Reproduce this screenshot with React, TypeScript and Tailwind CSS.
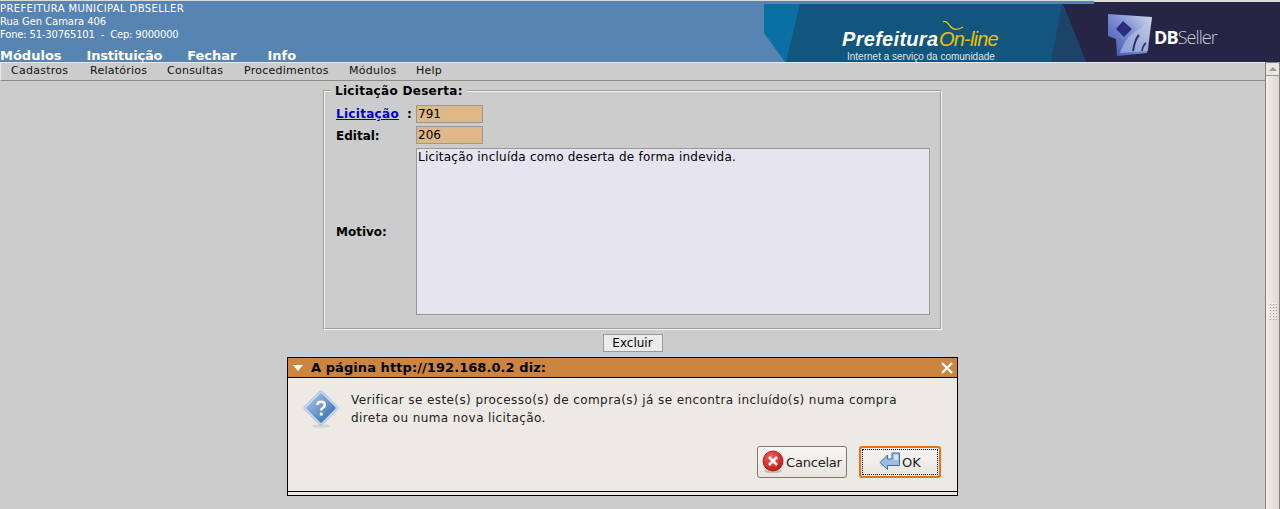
import { Fragment } from 'react';

const TOP_MENU = [
  { label: 'Módulos', cls: 'ml-0' },
  { label: 'Instituição', cls: 'ml-[25px] tracking-[-0.2px]' },
  { label: 'Fechar', cls: 'ml-[25px]' },
  { label: 'Info', cls: 'ml-[31px]' },
];
const SUB_MENU = [
  { label: 'Cadastros', cls: 'w-[59px]' },
  { label: 'Relatórios', cls: 'w-[57px]' },
  { label: 'Consultas', cls: 'w-[57px]' },
  { label: 'Procedimentos', cls: 'w-[85px]' },
  { label: 'Módulos', cls: 'w-[47px]' },
  { label: 'Help', cls: 'w-[25px]' },
];

function BannerArt() {
  return (
    <svg width="516" height="61" viewBox="0 0 516 61" className="block">
      <defs>
        <linearGradient id="cube" x1="0" y1="1" x2="1" y2="0">
          <stop offset="0" stopColor="#3a4fb4" />
          <stop offset="0.55" stopColor="#7f92d2" />
          <stop offset="1" stopColor="#d5dbee" />
        </linearGradient>
        <filter id="soft">
          <feGaussianBlur stdDeviation="0.6" />
        </filter>
      </defs>
      <rect width="516" height="61" fill="#125680" />
      <polygon points="0,3 36,3 22,61 20,61 0,32" fill="#0a6fa2" />
      <polygon points="0,32 21,61 0,61" fill="#5884b2" />
      <polygon points="298,1 516,1 516,61 322,61" fill="#272546" />
      <polygon points="287,61 298,3 322,61" fill="#1d4468" />
      <rect x="0" y="0" width="330" height="3" fill="#5884b2" />
      <rect x="330" y="0" width="186" height="1" fill="#dcdad5" />
      <g filter="url(#soft)">
        <path d="M344 13 L388 16 L383 52 L353 55 L352 38 L344 35 Z" fill="url(#cube)" />
        <path d="M359 20 L368 28 L360 36 L352 28 Z" fill="#2c2f7e" />
        <path d="M356 52 Q362 34 376 28 L386 17 L388 16 L384 50 Z" fill="#c3cbe6" opacity="0.55" />
        <path d="M369 50 Q371 38 375 34" fill="none" stroke="#2a3070" strokeWidth="2" />
        <path d="M378 50 Q379 44 382 42" fill="none" stroke="#2a3070" strokeWidth="1.6" />
      </g>
      <path d="M179 21 C181 19 184 22 186 25 C189 29 194 29 199 26" fill="none" stroke="#e8c400" strokeWidth="1.3" />
    </svg>
  );
}

function QuestionIcon() {
  return (
    <svg width="38" height="40" viewBox="0 0 38 40" className="block">
      <defs>
        <linearGradient id="q" x1="0" y1="0" x2="1" y2="0">
          <stop offset="0" stopColor="#8fb2da" />
          <stop offset="1" stopColor="#4a7db8" />
        </linearGradient>
      </defs>
      <ellipse cx="19" cy="36" rx="9" ry="1.6" fill="#000" opacity="0.1" />
      <rect x="6.2" y="5.2" width="25.6" height="25.6" rx="2.5" transform="rotate(45 19 18)" fill="#c7d7ea" stroke="#a8bfd9" strokeWidth="0.8" />
      <rect x="8.2" y="7.2" width="21.6" height="21.6" rx="1.5" transform="rotate(45 19 18)" fill="url(#q)" />
      <path d="M15.2 15 q0.4 -3.3 3.8 -3.3 q3.9 0 3.9 3 q0 2 -2.1 3.1 q-1.6 0.9 -1.6 2.6" fill="none" stroke="#fff" strokeWidth="2.5" />
      <rect x="17.8" y="22.6" width="2.9" height="2.9" fill="#fff" />
    </svg>
  );
}

function CancelIcon() {
  return (
    <svg width="22" height="24" viewBox="0 0 22 24" className="block">
      <defs>
        <radialGradient id="r" cx="0.4" cy="0.3" r="0.8">
          <stop offset="0" stopColor="#f2615a" />
          <stop offset="1" stopColor="#bf0e0c" />
        </radialGradient>
      </defs>
      <ellipse cx="11" cy="21" rx="9" ry="2" fill="#000" opacity="0.18" />
      <circle cx="11" cy="11" r="10" fill="url(#r)" stroke="#a80f0c" strokeWidth="0.8" />
      <path d="M7 7 L15 15 M15 7 L7 15" stroke="#fff" strokeWidth="2.6" />
    </svg>
  );
}

function OkIcon() {
  return (
    <svg width="22" height="20" viewBox="0 0 22 20" className="block">
      <path d="M20.5 1 H13 V7 H8.5 V3 L1 10.5 L8.5 17.5 V13.5 H20.5 Z" fill="#9dbde0" stroke="#3f6ea8" strokeWidth="1" strokeLinejoin="round" />
      <path d="M15 2.5 H19 V8 H15 Z" fill="#d5e3f2" />
    </svg>
  );
}

export default function App() {
  return (
    <div className="relative h-[509px] w-[1280px] overflow-hidden bg-[#cccccc] font-['DejaVu_Sans',sans-serif] text-black">
      {/* Cabecalho */}
      <header className="flex h-[62px] items-stretch border-t border-t-[#dcdad5] bg-[#5884b2]">
        <div className="w-[764px] shrink-0 text-white">
          <div className="pt-[1px] text-[10px] leading-[13px]">
            <div className="tracking-[0.38px]">PREFEITURA MUNICIPAL DBSELLER</div>
            <div className="tracking-[-0.05px]">Rua Gen Camara 406</div>
            <div className="whitespace-pre tracking-[-0.18px]">Fone: 51-30765101  -  Cep: 9000000</div>
          </div>
          <nav className="mt-[7px] flex text-[13px] leading-[15px] font-bold">
            {TOP_MENU.map((item) => (
              <span key={item.label} className={item.cls}>
                {item.label}
              </span>
            ))}
          </nav>
        </div>
        <div className="relative flex-1 overflow-hidden">
          <BannerArt />
          <span className="absolute top-[26px] left-[78px] text-[20px] leading-[24px] font-bold tracking-[0.3px] text-white italic font-['Liberation_Sans',sans-serif]">
            Prefeitura
          </span>
          <span className="absolute top-[26px] left-[175px] text-[20px] leading-[24px] tracking-[-0.8px] text-[#e8c400] italic font-['Liberation_Sans',sans-serif]">
            On-line
          </span>
          <span className="absolute top-[49px] left-[83px] text-[10px] leading-[13px] text-[#dfe7ee] font-['Liberation_Sans',sans-serif]">
            Internet a serviço da comunidade
          </span>
          <span className="absolute top-[26px] left-[390px] text-[18px] leading-[20px] tracking-[-0.9px] text-white font-['Open_Sans',sans-serif]">
            <b>DB</b>
            <span className="font-light text-[#c9cbd6]">Seller</span>
          </span>
        </div>
      </header>

      <div className="flex h-[447px]">
        <main className="min-w-0 flex-1">
          {/* Menu */}
          <div className="flex h-[19px] items-center gap-[20px] border-t border-b border-l border-t-[#e8e8e8] border-b-[#8f8b85] border-l-[#e8e8e8] pl-[10px] text-[11px] tracking-[0.25px] text-[#111]">
            {SUB_MENU.map((item) => (
              <span key={item.label} className={`whitespace-nowrap ${item.cls}`}>
                {item.label}
              </span>
            ))}
          </div>

          {/* Formulario */}
          <div className="ml-[323px] w-[619px]">
            <fieldset className="mt-[1px] h-[248px] border-2 border-[#f4f4f4] pr-[10px] pl-[11px] [border-style:groove]">
              <legend className="-ml-[5px] px-[4px] pt-[2px] text-[12px] leading-[15px] font-bold tracking-[0.3px]">Licitação Deserta:</legend>
              <div className="mt-[6px] grid grid-cols-[80px_1fr] items-center gap-y-[3px] text-[12px] font-bold">
                <div className="flex h-[18px] items-center tracking-[0.3px]">
                  <a href="#" className="text-[#0000cc] underline">
                    Licitação
                  </a>
                  <span className="ml-[8px]">:</span>
                </div>
                <div className="h-[18px] w-[67px] border border-[#999] bg-[#deb887] pl-[1px] text-[12px] leading-[17px] font-normal">791</div>
                <div className="flex h-[18px] items-center pt-[1px]">Edital:</div>
                <div className="h-[18px] w-[67px] border border-[#999] bg-[#deb887] pl-[1px] text-[12px] leading-[17px] font-normal">206</div>
                <div className="pt-[2px]">Motivo:</div>
                <div className="mt-[1px] h-[167px] w-[514px] border border-[#999] bg-[#e6e4f0] pt-[1px] pl-[1px] text-[12px] leading-[15px] font-normal tracking-[0.22px]">
                  Licitação incluída como deserta de forma indevida.
                </div>
              </div>
            </fieldset>
            <div className="mt-[4px] flex justify-center">
              <button className="h-[18px] w-[60px] border border-[#999] bg-[#ececec] pt-[1px] text-[12px] leading-[15px]">Excluir</button>
            </div>
          </div>
        </main>

        {/* Barra de rolagem */}
        <aside className="flex w-[15px] shrink-0 flex-col border-x border-x-[#8a7f76] bg-gradient-to-r from-[#f0eeea] to-[#dcd8d2]">
          <div className="flex h-[14px] items-center justify-center rounded-t-[2px] border-t border-b border-t-[#8a7f76] border-b-[#9d9488] bg-[#e8e6e1]">
            <div className="h-0 w-0 border-x-[4px] border-b-[4px] border-x-transparent border-b-[#9a9a98]" />
          </div>
          <div className="flex flex-1 justify-center pt-[227px]">
            <div className="grid h-[16px] grid-cols-3 gap-[2px]">
              {Array.from({ length: 18 }).map((_, i) => (
                <Fragment key={i}>
                  <div className="h-[1px] w-[1px] bg-[#fff] shadow-[1px_1px_0_#a59d92]" />
                </Fragment>
              ))}
            </div>
          </div>
        </aside>
      </div>

      {/* Dialogo */}
      <div className="absolute top-[357px] left-[287px] h-[139px] w-[671px] border border-black bg-[#edeae5]">
        <div className="flex h-[20px] items-center border-b border-b-black bg-[#cc853f] pr-[3px] pl-[5px]">
          <div className="mr-[8px] h-0 w-0 border-x-[5px] border-t-[6px] border-x-transparent border-t-white" />
          <span className="flex-1 text-[13px] leading-[15px] font-bold tracking-[0.07px] text-black">A página http://192.168.0.2 diz:</span>
          <svg width="14" height="14" viewBox="0 0 14 14" className="block">
            <path d="M2 2 L12 12 M12 2 L2 12" stroke="#fff" strokeWidth="2.2" />
          </svg>
        </div>
        <div className="flex h-[114px] flex-col border-b border-b-black">
          <div className="flex pt-[12px] pl-[14px]">
            <QuestionIcon />
            <p className="ml-[11px] pt-[1px] text-[12px] leading-[18px] tracking-[0.41px] text-[#222]">
              Verificar se este(s) processo(s) de compra(s) já se encontra incluído(s) numa compra
              <br />
              direta ou numa nova licitação.
            </p>
          </div>
          <div className="mt-[16px] flex justify-end gap-[12px] pr-[16px]">
            <button className="flex h-[32px] w-[90px] items-center gap-[2px] rounded-[3px] border border-[#7d7870] bg-gradient-to-b from-[#f7f5f3] to-[#e8e5e0] pl-[4px] text-[13px] tracking-[-0.2px] text-[#222]">
              <CancelIcon />
              <span className="pt-[2px]">Cancelar</span>
            </button>
            <button className="relative flex h-[32px] w-[82px] items-center justify-center rounded-[3px] border-2 border-[#e8711c] bg-gradient-to-b from-[#f7f5f3] to-[#e8e5e0] text-[13px] text-[#222]">
              <span className="absolute inset-[1px] border border-dotted border-black" />
              <OkIcon />
              <span className="ml-[1px] pt-[2px]">OK</span>
            </button>
          </div>
        </div>
      </div>
    </div>
  );
}
